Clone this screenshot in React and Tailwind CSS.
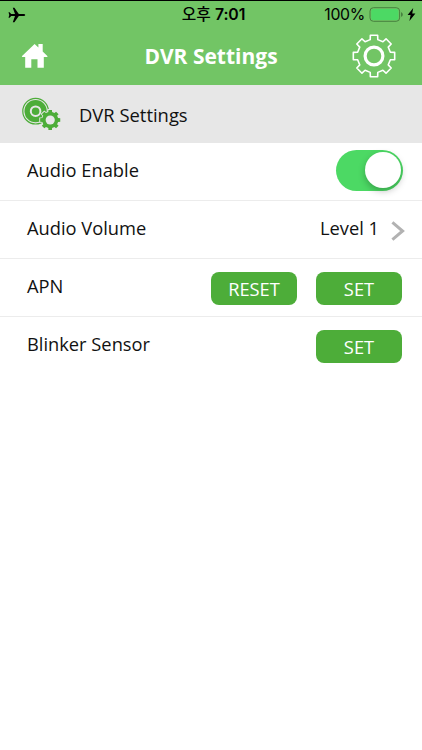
import { useState } from 'react';

const gearPath = (cx, cy, outer, inner, topHalf, baseHalf, teeth = 8) => {
  const points = [];
  for (let i = 0; i < teeth; i++) {
    const mid = (i * 360) / teeth - 90;
    [
      [inner, -baseHalf],
      [outer, -topHalf],
      [outer, topHalf],
      [inner, baseHalf],
    ].forEach(([r, offset]) => {
      const a = ((mid + offset) * Math.PI) / 180;
      points.push(`${(cx + r * Math.cos(a)).toFixed(2)} ${(cy + r * Math.sin(a)).toFixed(2)}`);
    });
  }
  return `M${points.join('L')}Z`;
};

const AirplaneIcon = () => (
  <svg width="18" height="16" viewBox="0 0 18 16">
    <path
      d="M17.2 8c0-.6-.8-1-1.9-1h-4.5L6.4.8H4.8L7 7H3.2L1.6 5.2H.5L1.3 8l-.8 2.8h1.1L3.2 9H7l-2.2 6.2h1.6L10.8 9h4.5c1.1 0 1.9-.4 1.9-1z"
      fill="#000"
    />
  </svg>
);

const BatteryIcon = () => (
  <svg width="36" height="15" viewBox="0 0 36 15">
    <rect x="1" y=".7" width="29.6" height="13.6" rx="3.4" fill="none" stroke="#47803f" strokeWidth="1" />
    <rect x="2.2" y="1.9" width="27.2" height="11.2" rx="2.2" fill="#4cd964" />
    <path d="M32 5.2c1.3.4 1.8 1.2 1.8 2.3s-.5 1.9-1.8 2.3z" fill="#47803f" />
  </svg>
);

const BoltIcon = () => (
  <svg width="9" height="13" viewBox="0 0 9 13">
    <path d="M6.2 0 .6 7h3L2.4 13l6-7.4H5.2z" fill="#000" />
  </svg>
);

const HomeIcon = () => (
  <svg width="28" height="26" viewBox="0 0 28 26">
    <path
      d="M13.6 1 .8 13.2l.5.8h2.9v10.8h6.1v-8.6h6.2v8.6h6.3V14h3.4l.4-.8-4.9-4.6V1h-4.3v3.6z"
      fill="#fff"
    />
  </svg>
);

const GearIcon = () => (
  <svg width="46" height="46" viewBox="0 0 46 46">
    <path
      d={gearPath(23, 23, 21, 16.8, 10, 13)}
      fill="none"
      stroke="#fff"
      strokeWidth="1.6"
      strokeLinejoin="round"
    />
    <circle cx="23" cy="23" r="8.9" fill="none" stroke="#fff" strokeWidth="3.2" />
  </svg>
);

const DvrIcon = () => (
  <svg width="40" height="36" viewBox="0 0 40 36">
    <circle cx="14.6" cy="15.2" r="12.8" fill="none" stroke="#4dad39" strokeWidth="1.2" />
    <circle cx="14.6" cy="15.2" r="11.1" fill="#4dad39" />
    <circle cx="14.6" cy="15.2" r="4.8" fill="none" stroke="#e7e7e7" strokeWidth="2" />
    <path
      d={gearPath(29.2, 24, 10.2, 8.1, 10, 13.5)}
      fill="#4dad39"
      stroke="#e7e7e7"
      strokeWidth="1.8"
      paintOrder="stroke"
    />
    <circle cx="29.2" cy="24" r="4.6" fill="#e7e7e7" />
  </svg>
);

const Chevron = () => (
  <svg width="14" height="20" viewBox="0 0 14 20">
    <path d="M1.4 1.3 11.6 10 1.4 18.7" fill="none" stroke="#b2b2b2" strokeWidth="3" />
  </svg>
);

const Row = ({ label, last, children }) => (
  <div className={`flex h-[58px] items-center border-b pl-[27px] pr-5 ${last ? 'border-transparent' : 'border-[#ececec]'}`}>
    <span className="flex-1 pb-[3px] text-[18.3px] leading-6">{label}</span>
    {children}
  </div>
);

const ActionButton = ({ children }) => (
  <button className="mt-0.5 h-[33px] w-[86px] rounded-lg bg-[#4dad39] pt-px text-[18.3px] leading-8 text-white">
    {children}
  </button>
);

const App = () => {
  const [audioEnabled, setAudioEnabled] = useState(true);

  return (
    <div className="h-[750px] w-[422px] overflow-hidden bg-white font-['Open_Sans','Noto_Sans_CJK_KR',sans-serif] text-[#111]">
      <header className="h-[85px] border-t border-black bg-[#72c565]">
        {/* Status bar */}
        <div className="grid h-[27px] grid-cols-[1fr_auto_1fr] items-center pl-2 pr-1.5 font-['Inter','Noto_Sans_CJK_KR',sans-serif] text-black">
          <AirplaneIcon />
          <span className="ml-[3px] text-[15.8px] leading-5 tracking-[-0.1px]">
            <span className="font-medium">오후</span> <span className="font-semibold">7:01</span>
          </span>
          <div className="flex items-center justify-end">
            <span className="mr-1 text-[15.8px] leading-5 tracking-[-0.3px]">100%</span>
            <BatteryIcon />
            <span className="ml-0.5">
              <BoltIcon />
            </span>
          </div>
        </div>

        {/* Nav bar */}
        <div className="flex h-14 items-center justify-between pl-[21px] pr-[25px]">
          <HomeIcon />
          <h1 className="ml-[22px] text-[21px] font-bold leading-7 text-white">DVR Settings</h1>
          <GearIcon />
        </div>
      </header>

      <div className="flex h-[58px] items-center bg-[#e7e7e7] pl-[21px]">
        <DvrIcon />
        <h2 className="ml-[18px] mt-px text-[18.4px] leading-6">DVR Settings</h2>
      </div>

      <Row label="Audio Enable">
        <button
          role="switch"
          aria-checked={audioEnabled}
          onClick={() => setAudioEnabled(!audioEnabled)}
          className={`mr-[-1px] mb-[3px] flex h-[41px] w-[67px] items-center rounded-full px-0.5 ${
            audioEnabled ? 'justify-end bg-[#4cd964]' : 'justify-start bg-[#e5e5e5]'
          }`}
        >
          <span className="size-9 rounded-full bg-white shadow-[0_3px_7px_rgba(0,0,0,0.25)]" />
        </button>
      </Row>
      <Row label="Audio Volume">
        <span className="mr-3 pb-[3px] text-[18.3px] leading-6">Level 1</span>
        <span className="mr-[-3px] mt-0.5">
          <Chevron />
        </span>
      </Row>
      <Row label="APN">
        <div className="flex gap-[19px]">
          <ActionButton>RESET</ActionButton>
          <ActionButton>SET</ActionButton>
        </div>
      </Row>
      <Row label="Blinker Sensor" last>
        <ActionButton>SET</ActionButton>
      </Row>
    </div>
  );
};

export default App;
